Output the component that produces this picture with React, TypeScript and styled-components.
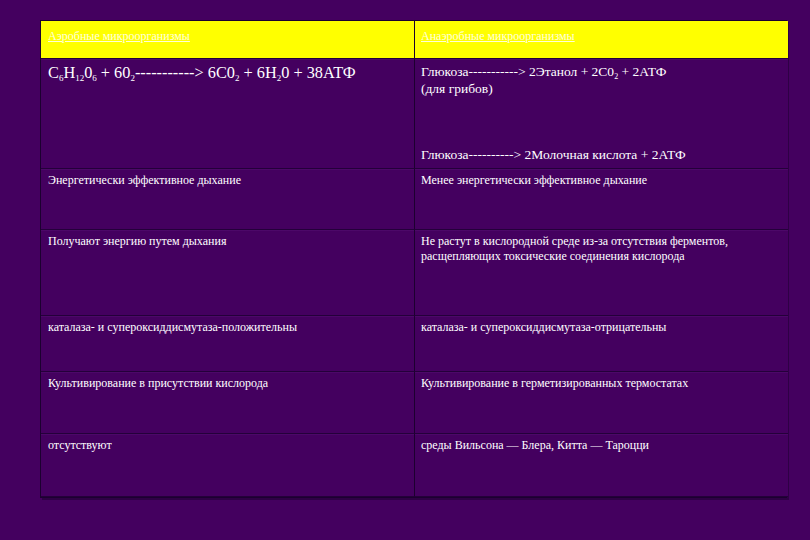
import styled, { createGlobalStyle } from "styled-components";

const GlobalStyle = createGlobalStyle`
    html, body {
        margin: 0;
        padding: 0;
        background: #44005f;
    }
`;

const Page = styled.div`
    width: 810px;
    height: 540px;
    background: #44005f;
    padding: 20px 0 0 40px;
    box-sizing: border-box;
    font-family: "Liberation Serif", "DejaVu Serif", serif;
`;

const Table = styled.div`
    display: grid;
    grid-template-columns: 374px 373px;
    grid-template-rows: 38px 110px 61px 86px 56px 62px 63px;
    width: 747px;
    border: 1px solid #1c0030;
    box-sizing: border-box;
    box-shadow: 2px 2px 0 #2e0045;
`;

const Cell = styled.div<{ $head?: boolean; $size?: number }>`
    box-sizing: border-box;
    border-right: 1px solid #1c0030;
    border-bottom: 1px solid #24003a;
    padding: ${(p) => (p.$head ? "8px 7px" : "4px 7px")};
    background: ${(p) => (p.$head ? "#ffff00" : "#44005f")};
    color: #ffffff;
    font-family: "Liberation Serif", "DejaVu Serif", serif;
    font-size: ${(p) => p.$size ?? 12}px;
    line-height: 1.25;
    box-shadow: ${(p) => (p.$head ? "none" : "inset 0 1px 0 #4c0868")};

    &:nth-child(2n) {
        border-right: none;
        padding-left: 6px;
    }
`;

const HeadText = styled.span`
    font-size: 12px;
    color: #ffffff;
    text-decoration: underline;
    opacity: 0.85;
`;

const SplitCell = styled(Cell)`
    display: flex;
    flex-direction: column;
    justify-content: space-between;
    padding-top: 5px;
    padding-bottom: 4px;
`;

const Formula = styled.span`
    font-size: 16.3px;

    sub {
        font-size: 9px;
        vertical-align: -3px;
        line-height: 0;
    }
`;

const Small = styled.sub`
    font-size: 8px;
    vertical-align: -3px;
    line-height: 0;
`;

export default function App() {
    return (
        <>
            <GlobalStyle />
            <Page>
                <Table>
                    <Cell $head>
                        <HeadText>Аэробные микроорганизмы</HeadText>
                    </Cell>
                    <Cell $head>
                        <HeadText>Анаэробные микроорганизмы</HeadText>
                    </Cell>

                    <Cell $size={16}>
                        <Formula>
                            C<sub>6</sub>H<sub>12</sub>0<sub>6</sub> + 60<sub>2</sub>-----------&gt; 6C0<sub>2</sub> + 6H<sub>2</sub>0 + 38АТФ
                        </Formula>
                    </Cell>
                    <SplitCell $size={13.5}>
                        <div>
                            Глюкоза-----------&gt; 2Этанол + 2C0<Small>2</Small> + 2АТФ
                            <br />
                            (для грибов)
                        </div>
                        <div>Глюкоза----------&gt; 2Молочная кислота + 2АТФ</div>
                    </SplitCell>

                    <Cell>Энергетически эффективное дыхание</Cell>
                    <Cell>Менее энергетически эффективное дыхание</Cell>

                    <Cell>Получают энергию путем дыхания</Cell>
                    <Cell>
                        Не растут в кислородной среде из-за отсутствия ферментов,
                        <br />
                        расщепляющих токсические соединения кислорода
                    </Cell>

                    <Cell>каталаза- и супероксиддисмутаза-положительны</Cell>
                    <Cell>каталаза- и супероксиддисмутаза-отрицательны</Cell>

                    <Cell>Культивирование в присутствии кислорода</Cell>
                    <Cell>Культивирование в герметизированных термостатах</Cell>

                    <Cell>отсутствуют</Cell>
                    <Cell>среды Вильсона — Блера, Китта — Тароцци</Cell>
                </Table>
            </Page>
        </>
    );
}
